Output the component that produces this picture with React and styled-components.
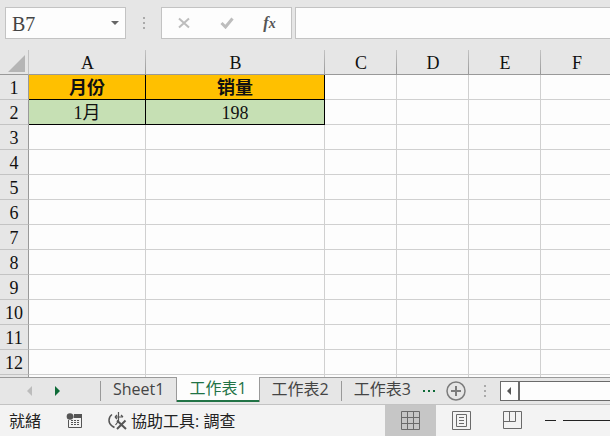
import React from 'react';
import styled, { createGlobalStyle } from 'styled-components';

const colors = {
  chrome: '#e6e6e6',
  paper: '#fdfdfd',
  line: '#d0d0d0',
  border: '#c3c3c3',
  edge: '#999999',
  icon: '#6a6a6a',
  green: '#217346',
  gold: '#ffc000',
  lime: '#c6e0b4',
};

const serif = `'Liberation Serif', 'Noto Sans CJK TC', serif`;
const sans = `'Open Sans', 'Noto Sans CJK TC', sans-serif`;

const GlobalStyle = createGlobalStyle`
  * {
    box-sizing: border-box;
  }
  body {
    margin: 0;
    background: ${colors.chrome};
  }
  button, input {
    margin: 0;
    padding: 0;
    border: 0;
    border-radius: 0;
    background: none;
    font: inherit;
    color: inherit;
  }
  svg {
    display: block;
    flex: none;
  }
`;

const Workbook = styled.div`
  display: flex;
  flex-direction: column;
  height: 100vh;
  overflow: hidden;
  color: #222;
  font-family: ${sans};
`;

const FormulaBar = styled.div`
  display: flex;
  flex: none;
  padding: 7px 0 11px 5px;
`;

const Box = styled.div`
  display: flex;
  align-items: center;
  height: 32px;
  border: 1px solid ${colors.border};
  background: ${colors.paper};
`;

const NameBox = styled(Box)`
  width: 121px;
  padding: 0 6px;
`;

const NameInput = styled.input`
  flex: 1;
  min-width: 0;
  padding-top: 3px;
  color: #444;
  font-family: ${serif};
  font-size: 20px;
  outline: none;
`;

const Grip = styled.div`
  display: flex;
  flex: none;
  align-items: center;
  justify-content: center;
  width: ${({ $width }) => $width}px;
`;

const Actions = styled(Box)`
  justify-content: space-around;
  width: 131px;
`;

const FormulaBox = styled(Box)`
  flex: 1;
  margin-left: 3px;
  border-right: 0;
`;

const FormulaInput = styled.input`
  width: 100%;
  padding: 0 8px;
  outline: none;
`;

const IconButton = styled.button`
  display: flex;
  align-items: center;
  align-self: center;
  justify-content: center;
  min-width: ${({ $width = 16 }) => $width}px;
  height: 20px;
`;

const FunctionMark = styled.span`
  color: #555;
  font: italic 700 16px/20px ${serif};

  small {
    font-size: 14px;
  }
`;

const Sheet = styled.div`
  flex: 1;
  min-height: 0;
  overflow: hidden;
  background: ${colors.paper};
`;

const Grid = styled.table`
  width: 613px;
  table-layout: fixed;
  border-collapse: separate;
  border-spacing: 0;
  font-family: ${serif};
  font-size: 18px;
  line-height: 22px;
  text-align: center;
  color: #111;

  th, td {
    height: 25px;
    padding: 2px 0 0;
  }
`;

const Corner = styled.td`
  background: ${colors.chrome};
  border-right: 1px solid ${colors.border};
  border-bottom: 1px solid ${colors.edge};

  svg {
    margin-left: 8px;
  }
`;

const ColumnHead = styled.th`
  background: linear-gradient(${colors.border}, ${colors.edge}) right / 1px 100% no-repeat ${colors.chrome};
  border-bottom: 1px solid ${colors.edge};
  font-weight: 400;
`;

const RowHead = styled.th`
  background: ${colors.chrome};
  border-right: 1px solid ${colors.edge};
  border-bottom: 1px solid ${colors.border};
  font-weight: 400;
`;

const fills = { title: colors.gold, data: colors.lime };

const Cell = styled.td`
  background: ${({ $kind }) => fills[$kind] || colors.paper};
  border-right: 1px solid ${({ $kind }) => ($kind ? '#000' : colors.line)};
  border-bottom: 1px solid ${({ $kind }) => ($kind ? '#000' : colors.line)};
  font-weight: ${({ $kind }) => ($kind === 'title' ? 700 : 400)};
`;

const TabBar = styled.div`
  display: flex;
  flex: none;
  height: 28px;
  border-top: 1px solid ${colors.edge};
  border-bottom: 1px solid ${colors.border};
  background: ${colors.chrome};
`;

const TabNav = styled.div`
  display: flex;
  align-items: center;
  gap: 12px;
  width: 100px;
  padding-left: 22px;
`;

const Divider = styled.div`
  width: 1px;
  height: 20px;
  margin-top: 3px;
  background: ${colors.edge};
`;

const Tab = styled.button`
  flex: none;
  height: 24px;
  padding: 0 12px 3px;
  color: #444;
  font-size: 16px;
  line-height: 20px;
  white-space: nowrap;
`;

const ActiveTab = styled(Tab)`
  height: 25px;
  margin-top: -1px;
  border: solid ${colors.edge};
  border-width: 0 1px;
  background: ${colors.paper};
  box-shadow: inset 0 -2px ${colors.green};
  color: ${colors.green};
`;

const Scrollbar = styled.div`
  display: flex;
  flex: 1;
  height: 20px;
  margin: 3px 0 0 7px;
  border: 1px solid ${colors.icon};
  border-right: 0;
  background: ${colors.paper};
`;

const ScrollButton = styled.button`
  display: flex;
  align-items: center;
  justify-content: center;
  width: 19px;
  border-right: 2px solid ${colors.icon};
`;

const StatusBar = styled.div`
  display: flex;
  flex: none;
  align-items: center;
  height: 31px;
  padding-left: 9px;
  background: #f3f3f3;
  font-size: 16px;
  line-height: 24px;
  white-space: nowrap;
`;

const StatusItem = styled.button`
  display: flex;
  align-items: center;
  gap: 4px;
  margin-left: 25px;
`;

const Views = styled.div`
  display: flex;
  align-self: stretch;
  margin-left: auto;
`;

const ViewButton = styled.button`
  display: flex;
  align-items: center;
  justify-content: center;
  width: 51px;
  background: ${({ $active }) => ($active ? '#c6c6c6' : 'transparent')};
`;

const Zoom = styled.div`
  display: flex;
  align-items: center;
  gap: 7px;
  width: 72px;
  padding-left: 7px;
`;

const ZoomTrack = styled.div`
  flex: 1;
  height: 1px;
  background: #222;
`;

const columns = [
  { name: 'A', width: 117 },
  { name: 'B', width: 179 },
  { name: 'C', width: 72 },
  { name: 'D', width: 72 },
  { name: 'E', width: 72 },
  { name: 'F', width: 72 },
];

const values = [
  { kind: 'title', cells: ['月份', '销量'] },
  { kind: 'data', cells: ['1月', '198'] },
];

const rows = Array.from({ length: 12 }, (_, i) => i + 1);

const Dots = () => (
  <svg width="2" height="12" fill="#aaa">
    <path d="M0 0h2v2H0zM0 5h2v2H0zM0 10h2v2H0z" />
  </svg>
);

const Arrow = ({ left, color }) => (
  <svg width="6" height="10" fill={color}>
    <path d={left ? 'M5 0v10L0 5z' : 'M0 0v10l5-5z'} />
  </svg>
);

const App = () => (
  <>
    <GlobalStyle />
    <Workbook>
      <FormulaBar>
        <NameBox>
          <NameInput aria-label="Name box" defaultValue="B7" />
          <IconButton aria-label="Cell names" $width={8}>
            <svg width="8" height="4" fill="#666">
              <path d="M0 0h8L4 4z" />
            </svg>
          </IconButton>
        </NameBox>
        <Grip $width={35}>
          <Dots />
        </Grip>
        <Actions>
          <IconButton aria-label="Cancel">
            <svg width="12" height="12" fill="none" stroke="#bdbdbd" strokeWidth="2">
              <path d="M1 1.500l10 9M11 1.500L1 10.500" />
            </svg>
          </IconButton>
          <IconButton aria-label="Enter">
            <svg width="14" height="12" fill="none" stroke="#bdbdbd" strokeWidth="3">
              <path d="M1.500 6l4 4 7-8.500" />
            </svg>
          </IconButton>
          <IconButton aria-label="Insert function">
            <FunctionMark>
              f<small>x</small>
            </FunctionMark>
          </IconButton>
        </Actions>
        <FormulaBox>
          <FormulaInput aria-label="Formula" />
        </FormulaBox>
      </FormulaBar>

      <Sheet>
        <Grid>
          <colgroup>
            <col width="29" />
            {columns.map(({ name, width }) => (
              <col key={name} width={width} />
            ))}
          </colgroup>
          <thead>
            <tr>
              <Corner>
                <svg width="17" height="17" fill="#b5b5b5">
                  <path d="M17 0v17H0z" />
                </svg>
              </Corner>
              {columns.map(({ name }) => (
                <ColumnHead key={name} scope="col">
                  {name}
                </ColumnHead>
              ))}
            </tr>
          </thead>
          <tbody>
            {rows.map((row, i) => (
              <tr key={row}>
                <RowHead scope="row">{row}</RowHead>
                {columns.map(({ name }, j) => {
                  const text = values[i]?.cells[j];
                  return (
                    <Cell key={name} $kind={text && values[i].kind}>
                      {text}
                    </Cell>
                  );
                })}
              </tr>
            ))}
            <tr>
              <RowHead />
              {columns.map(({ name }) => (
                <Cell key={name} />
              ))}
            </tr>
          </tbody>
        </Grid>
      </Sheet>

      <TabBar>
        <TabNav>
          <IconButton aria-label="Previous sheet">
            <Arrow left color="#bcbcbc" />
          </IconButton>
          <IconButton aria-label="Next sheet">
            <Arrow color="#0e6b38" />
          </IconButton>
        </TabNav>
        <Divider />
        <Tab>Sheet1</Tab>
        <ActiveTab>工作表1</ActiveTab>
        <Tab>工作表2</Tab>
        <Divider />
        <Tab>工作表3</Tab>
        <IconButton aria-label="More sheets" $width={12}>
          <svg width="12" height="2" fill="#0e6b38">
            <path d="M0 0h2v2H0zM5 0h2v2H5zM10 0h2v2h-2z" />
          </svg>
        </IconButton>
        <Grip $width={42}>
          <IconButton aria-label="New sheet" $width={22}>
            <svg width="20" height="20" fill="none" stroke="#7c7c7c">
              <circle cx="10" cy="10" r="9" strokeWidth="1.500" />
              <path d="M5 10h10M10 5v10" strokeWidth="2" />
            </svg>
          </IconButton>
        </Grip>
        <Grip $width={16}>
          <Dots />
        </Grip>
        <Scrollbar>
          <ScrollButton aria-label="Scroll left">
            <svg width="4" height="8" fill="#555">
              <path d="M4 0v8L0 4z" />
            </svg>
          </ScrollButton>
        </Scrollbar>
      </TabBar>

      <StatusBar>
        <span>就緒</span>
        <StatusItem aria-label="Record macro">
          <svg width="16" height="16" fill="#555">
            <circle cx="4" cy="3.500" r="3.300" />
            <path d="M8 1h8v4H7.500z" />
            <path d="M2.500 7v7.500h13V4" fill="none" stroke="#555" />
            <path d="M5 7h2v1H5zM8 7h2v1H8zM11 7h2v1h-2zM5 9h2v1H5zM8 9h2v1H8zM11 9h2v1h-2zM5 11h2v1H5zM8 11h2v1H8zM11 11h2v1h-2z" />
          </svg>
        </StatusItem>
        <StatusItem>
          <svg width="20" height="20" fill="none" stroke="#555" strokeWidth="1.500">
            <path d="M5 3.500a7 7 0 0 0 0 11.500l2.500 1.500" />
            <path d="M8 6h8M8 6l2-2M8 6l2 2M16 6l-2-2M11.500 1v9l-3 4" strokeWidth="1.200" />
            <path d="M10 9.500l9 8.500M18.500 9.500l-8.500 8.500" strokeWidth="2" />
          </svg>
          協助工具: 調查
        </StatusItem>
        <Views>
          <ViewButton $active aria-label="Normal">
            <svg width="19" height="19" fill="none" stroke="#6a6a6a">
              <path d="M.5.5h18v18H.5zM6.500 0v19M12.500 0v19M0 6.500h19M0 12.500h19" />
            </svg>
          </ViewButton>
          <ViewButton aria-label="Page layout">
            <svg width="19" height="19" fill="none" stroke="#6a6a6a">
              <path d="M.5.5h18v18H.5zM4.500 3.500h10v12h-10zM7 6.500h5M7 9.500h5M7 12.500h5" />
            </svg>
          </ViewButton>
          <ViewButton aria-label="Page break preview">
            <svg width="19" height="19" fill="none" stroke="#6a6a6a">
              <path d="M.5.5h18v17H.5zM.5 10.500h12V.5M6.500.5v10" />
            </svg>
          </ViewButton>
        </Views>
        <Zoom>
          <IconButton aria-label="Zoom out" $width={11}>
            <svg width="11" height="1" fill="#222">
              <path d="M0 0h11v1H0z" />
            </svg>
          </IconButton>
          <ZoomTrack />
        </Zoom>
      </StatusBar>
    </Workbook>
  </>
);

export default App;
